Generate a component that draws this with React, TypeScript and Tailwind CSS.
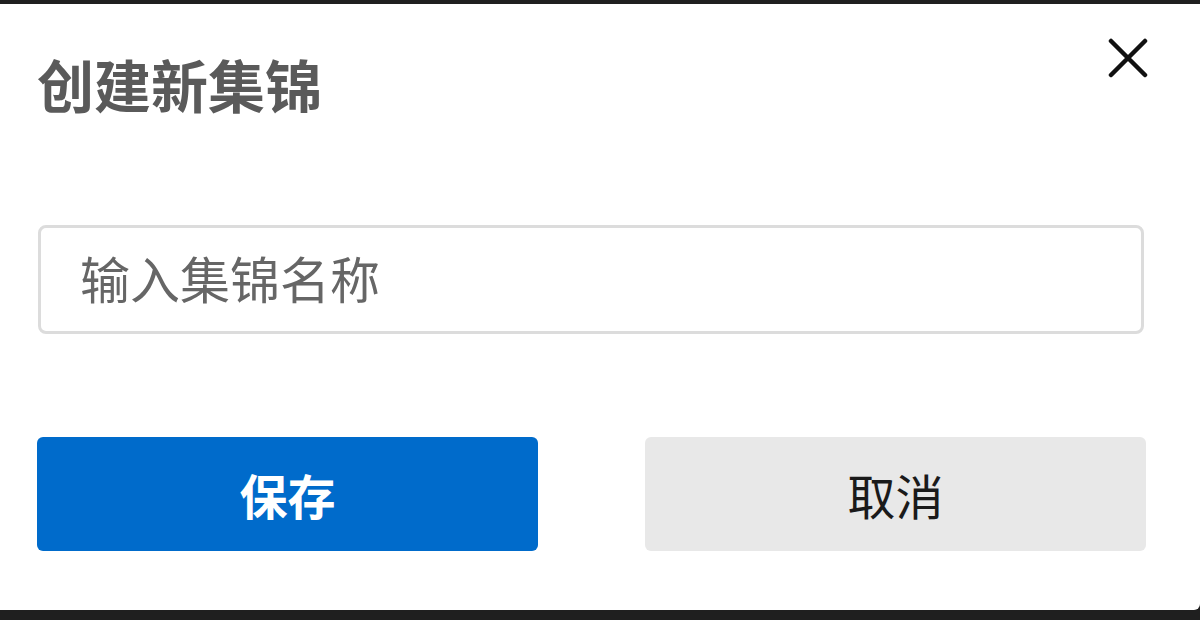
import { useState } from 'react'

export default function App() {
    const [name, setName] = useState('')

    return (
        <div className="h-[620px] w-[1200px] bg-[#1f1f1f] pt-[4px] pb-[10px] flex flex-col">
            <div
                className="flex-1 bg-white rounded-br-[6px] pl-[37px] pr-[54px] flex flex-col"
                style={{ fontFamily: '"Noto Sans CJK SC", "Noto Sans", sans-serif' }}
            >
                <div className="flex justify-between items-start">
                    <h2 className="mt-[51px] text-[57px] leading-none font-bold text-[#5a5a5a]">创建新集锦</h2>
                    <button className="mt-[34px] mr-[-2px] w-[40px] h-[40px] flex items-center justify-center">
                        <svg width="40" height="40" viewBox="0 0 40 40" fill="none">
                            <path d="M3 3L37 37M37 3L3 37" stroke="#111" strokeWidth="4.5" strokeLinecap="round" />
                        </svg>
                    </button>
                </div>
                <input
                    value={name}
                    onChange={(e) => setName(e.target.value)}
                    placeholder="输入集锦名称"
                    className="mt-[113px] ml-[1px] mr-[2px] h-[109px] border-[3px] border-[#dcdcdc] rounded-[8px] pl-[39px] pb-[6px] text-[50px] text-[#333] placeholder:text-[#666] outline-none"
                />
                <div className="mt-[103px] flex justify-between">
                    <button className="w-[501px] h-[114px] rounded-[6px] bg-[#006bcb] text-white text-[48px] font-bold">
                        保存
                    </button>
                    <button className="w-[501px] h-[114px] rounded-[6px] bg-[#e8e8e8] text-[#1a1a1a] text-[48px]">
                        取消
                    </button>
                </div>
            </div>
        </div>
    )
}
